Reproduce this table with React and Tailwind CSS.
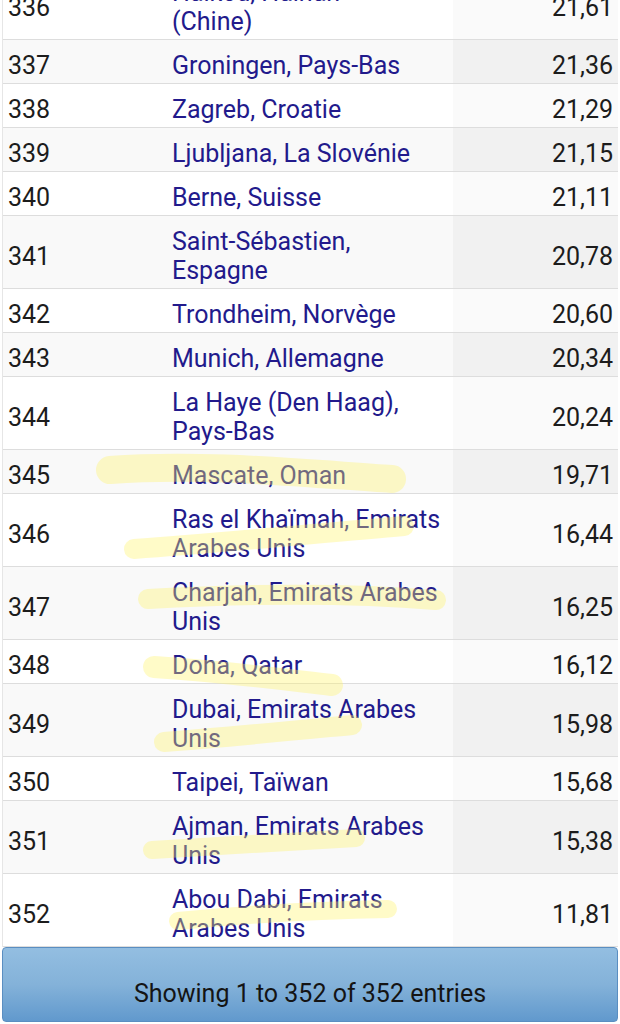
import React from 'react';

const rows = [
  { rank: 336, city: ['Haikou, Hainan', '(Chine)'], value: '21,61' },
  { rank: 337, city: ['Groningen, Pays-Bas'], value: '21,36' },
  { rank: 338, city: ['Zagreb, Croatie'], value: '21,29' },
  { rank: 339, city: ['Ljubljana, La Slovénie'], value: '21,15' },
  { rank: 340, city: ['Berne, Suisse'], value: '21,11' },
  { rank: 341, city: ['Saint-Sébastien,', 'Espagne'], value: '20,78' },
  { rank: 342, city: ['Trondheim, Norvège'], value: '20,60' },
  { rank: 343, city: ['Munich, Allemagne'], value: '20,34' },
  { rank: 344, city: ['La Haye (Den Haag),', 'Pays-Bas'], value: '20,24' },
  { rank: 345, city: ['Mascate, Oman'], value: '19,71' },
  { rank: 346, city: ['Ras el Khaïmah, Emirats', 'Arabes Unis'], value: '16,44' },
  { rank: 347, city: ['Charjah, Emirats Arabes', 'Unis'], value: '16,25' },
  { rank: 348, city: ['Doha, Qatar'], value: '16,12' },
  { rank: 349, city: ['Dubai, Emirats Arabes', 'Unis'], value: '15,98' },
  { rank: 350, city: ['Taipei, Taïwan'], value: '15,68' },
  { rank: 351, city: ['Ajman, Emirats Arabes', 'Unis'], value: '15,38' },
  { rank: 352, city: ['Abou Dabi, Emirats', 'Arabes Unis'], value: '11,81' },
];

// highlighter strokes someone drew over the screenshot
const marks = [
  { d: 'M110 470 C 200 463, 300 473, 392 479', w: 28 },
  { d: 'M134 549 C 220 543, 320 533, 404 526', w: 20 },
  { d: 'M148 599 C 240 594, 340 592, 436 600', w: 20 },
  { d: 'M154 667 C 220 671, 280 679, 332 685', w: 22 },
  { d: 'M164 742 C 230 737, 300 730, 352 725', w: 20 },
  { d: 'M152 850 C 220 846, 300 841, 356 838', w: 18 },
  { d: 'M178 921 C 250 914, 320 910, 388 909', w: 18 },
];

function Row({ row }) {
  const odd = row.rank % 2 === 1;
  return (
    <div className={`flex border-b border-[#dddddd] ${odd ? 'bg-[#f9f9f9]' : 'bg-white'}`}>
      <div className="w-[162px] shrink-0 flex items-center pl-[5px] pt-[11px] pb-[3px] text-[#1c1c1c]">
        {row.rank}
      </div>
      <div className="w-[288px] shrink-0 flex flex-col justify-center pl-[7px] pt-[11px] pb-[3px] text-[#221a8c]">
        {row.city.map((line) => (
          <span key={line} className="whitespace-nowrap">{line}</span>
        ))}
      </div>
      <div className={`flex-1 flex items-center justify-end pr-[5px] pt-[11px] pb-[3px] text-[#1c1c1c] ${odd ? 'bg-[#f1f1f1]' : 'bg-[#fafafa]'}`}>
        {row.value}
      </div>
    </div>
  );
}

export default function App() {
  return (
    <div
      className="relative h-[1024px] w-[620px] overflow-hidden bg-white text-[25px] leading-[29px]"
      style={{ fontFamily: 'Roboto, "Noto Sans", sans-serif' }}
    >
      <div className="-mt-[33px] mx-[2px] border-l border-[#e6e6e6]">
        {rows.map((row) => (
          <Row key={row.rank} row={row} />
        ))}
      </div>

      <div className="mx-[2px] h-[75px] rounded-[4px] border border-[#5a8ec1] bg-gradient-to-b from-[#93bee1] via-[#84b2d9] to-[#6199cd] flex items-end justify-center pb-[12px] text-[#141414] leading-[30px]">
        Showing 1 to 352 of 352 entries
      </div>

      <svg className="absolute inset-0 pointer-events-none" width="620" height="1024" viewBox="0 0 620 1024">
        <g opacity="0.36" fill="none" stroke="#fff46a" strokeLinecap="round">
          {marks.map((m, i) => (
            <path key={i} d={m.d} strokeWidth={m.w} />
          ))}
        </g>
      </svg>
    </div>
  );
}
